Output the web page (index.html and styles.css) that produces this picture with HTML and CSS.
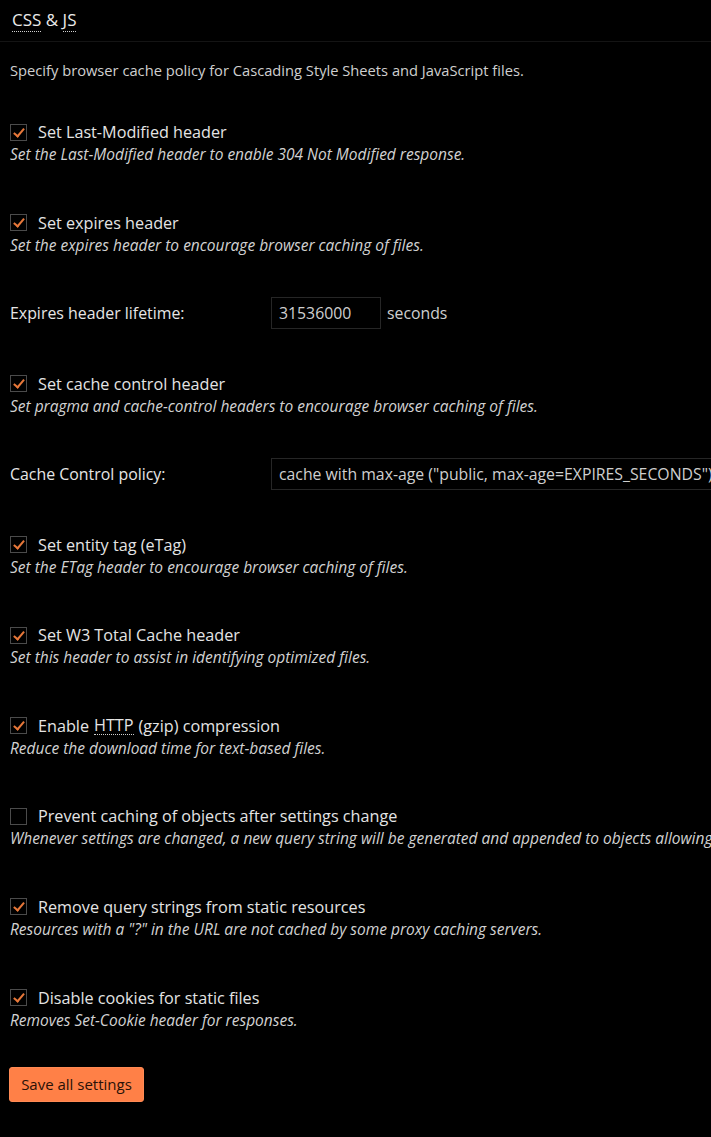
FILE: index.html
```html
<!DOCTYPE html>
<html>
<head>
<meta charset="utf-8">
<link rel="stylesheet" href="styles.css">
</head>
<body>
<div class="page">
  <h3 class="title"><abbr class="dot" title="Cascading Style Sheet">CSS</abbr> &amp; <abbr class="dot" title="JavaScript">JS</abbr></h3>
  <p class="intro">Specify browser cache policy for Cascading Style Sheets and JavaScript files.</p>

  <div class="item">
    <label class="check"><span class="box on"></span>Set Last-Modified header</label>
    <div class="desc">Set the Last-Modified header to enable 304 Not Modified response.</div>
  </div>

  <div class="item">
    <label class="check"><span class="box on"></span>Set expires header</label>
    <div class="desc">Set the expires header to encourage browser caching of files.</div>
  </div>

  <div class="field">
    <span class="flabel">Expires header lifetime:</span>
    <span class="input short">31536000</span>
    <span class="unit">seconds</span>
  </div>

  <div class="item">
    <label class="check"><span class="box on"></span>Set cache control header</label>
    <div class="desc">Set pragma and cache-control headers to encourage browser caching of files.</div>
  </div>

  <div class="field">
    <span class="flabel">Cache Control policy:</span>
    <span class="input wide">cache with max-age ("public, max-age=EXPIRES_SECONDS")</span>
  </div>

  <div class="item">
    <label class="check"><span class="box on"></span>Set entity tag (eTag)</label>
    <div class="desc">Set the ETag header to encourage browser caching of files.</div>
  </div>

  <div class="item">
    <label class="check"><span class="box on"></span>Set W3 Total Cache header</label>
    <div class="desc">Set this header to assist in identifying optimized files.</div>
  </div>

  <div class="item">
    <label class="check"><span class="box on"></span>Enable <abbr class="dot" title="Hypertext Transfer Protocol">HTTP</abbr> (gzip) compression</label>
    <div class="desc">Reduce the download time for text-based files.</div>
  </div>

  <div class="item">
    <label class="check"><span class="box"></span>Prevent caching of objects after settings change</label>
    <div class="desc">Whenever settings are changed, a new query string will be generated and appended to objects allowing the new policy to be applied.</div>
  </div>

  <div class="item">
    <label class="check"><span class="box on"></span>Remove query strings from static resources</label>
    <div class="desc">Resources with a "?" in the URL are not cached by some proxy caching servers.</div>
  </div>

  <div class="item last">
    <label class="check"><span class="box on"></span>Disable cookies for static files</label>
    <div class="desc">Removes Set-Cookie header for responses.</div>
  </div>

  <button class="save">Save all settings</button>
</div>
</body>
</html>
```

FILE: styles.css
```css
html, body {
  margin: 0;
  padding: 0;
  background: #000;
}
body {
  font-family: "Open Sans", "Noto Sans", sans-serif;
  color: #e2e2e2;
  overflow: hidden;
}
.page {
  width: 711px;
  overflow: hidden;
}
.title {
  margin: 0;
  height: 41px;
  line-height: 40px;
  padding-left: 12px;
  font-size: 17px;
  font-weight: 400;
  color: #eaeaea;
  border-bottom: 1px solid #141414;
}
.dot {
  text-decoration: none;
  border-bottom: 1px dotted #cfcfcf;
}
.intro {
  margin: 18px 0 0 10px;
  line-height: 20px;
  font-size: 14.7px;
  color: #cfcfcf;
  white-space: nowrap;
}
.item {
  margin: 41px 0 0 0;
  padding-left: 10px;
}
.item + .item {
  margin-top: 46.6px;
}
.check {
  display: flex;
  align-items: center;
  height: 22px;
  font-size: 16.2px;
  color: #e4e4e4;
  white-space: nowrap;
}
.check .dot {
  margin: 0 5px;
  line-height: 17px;
}
.box {
  position: relative;
  width: 17px;
  height: 17px;
  box-sizing: border-box;
  border: 1px solid #4b4b4b;
  margin-right: 11px;
  flex: none;
}
.box.on::after {
  content: "";
  position: absolute;
  left: 5px;
  top: 1px;
  width: 4px;
  height: 9px;
  border: solid #e8783a;
  border-width: 0 2.5px 2.5px 0;
  transform: rotate(40deg);
}
.desc {
  height: 22px;
  line-height: 22px;
  font-size: 15.5px;
  font-style: italic;
  color: #d2d2d2;
  white-space: nowrap;
  overflow: hidden;
  text-overflow: clip;
  width: 701px;
}
.field {
  display: flex;
  align-items: center;
  margin-top: 41px;
  margin-bottom: 44px;
  padding-left: 10px;
  height: 32px;
  white-space: nowrap;
}
.field + .item {
  margin-top: 0;
}
.flabel {
  width: 261px;
  flex: none;
  font-size: 15.9px;
  color: #e6e6e6;
}
.input {
  box-sizing: border-box;
  height: 32px;
  line-height: 30px;
  border: 1px solid #262626;
  padding: 0 7px;
  font-size: 15.8px;
  color: #cfcfcf;
  flex: none;
}
.input.short {
  width: 110px;
}
.input.wide {
  width: 470px;
  overflow: hidden;
}
.unit {
  margin-left: 6px;
  font-size: 15.8px;
  color: #cfcfcf;
}
.save {
  display: block;
  margin: 36px 0 0 9px;
  height: 35px;
  width: 135px;
  padding: 0;
  background: #ff8047;
  border: 1px solid #ff8a54;
  border-radius: 3px;
  font-family: "Open Sans", "Noto Sans", sans-serif;
  font-size: 15px;
  color: #2a1208;
}
```
